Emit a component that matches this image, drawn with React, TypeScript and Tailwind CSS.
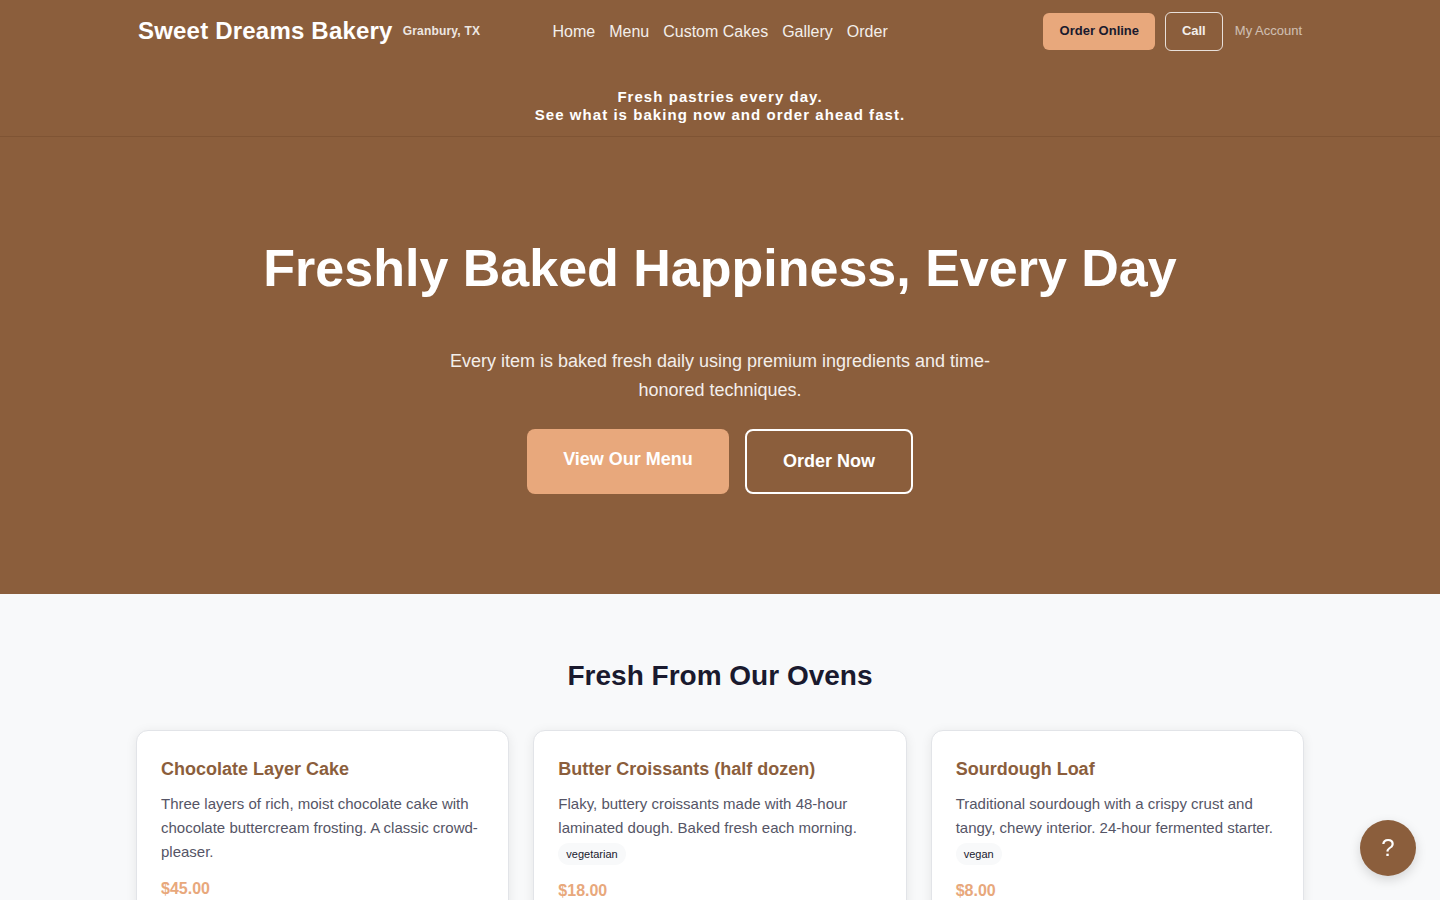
const nav = ["Home", "Menu", "Custom Cakes", "Gallery", "Order"];
const items = [
  { t: "Chocolate Layer Cake", d: "Three layers of rich, moist chocolate cake with chocolate buttercream frosting. A classic crowd-pleaser.", p: "$45.00" },
  { t: "Butter Croissants (half dozen)", d: "Flaky, buttery croissants made with 48-hour laminated dough. Baked fresh each morning.", tag: "vegetarian", p: "$18.00" },
  { t: "Sourdough Loaf", d: "Traditional sourdough with a crispy crust and tangy, chewy interior. 24-hour fermented starter.", tag: "vegan", p: "$8.00" },
];

export default function App() {
  return (
    <div className="h-[900px] overflow-hidden bg-[#f8f9fa] font-['Liberation_Sans',Arial,sans-serif] text-[#1a1a2e]">
      <div className="bg-[#8b5e3c] text-white">
        <header className="border-b border-[#7f5434]">
          <div className="mx-auto flex h-[62px] w-[1168px] items-center pl-[2px] pr-[2px]">
            <div className="flex w-[414.5px] items-center gap-[10px] tracking-[0.2px]">
              <span className="text-[24px] leading-[30px] font-bold">Sweet Dreams Bakery</span>
              <span className="text-[12px] font-bold opacity-85">Granbury, TX</span>
            </div>
            <nav className="flex gap-[14px] pt-[1px] text-[16px] opacity-90">
              {nav.map((n) => <span key={n}>{n}</span>)}
            </nav>
            <div className="ml-auto flex items-center">
              <span className="flex h-[37px] w-[112px] items-center justify-center rounded-md bg-[#e8a87c] pl-[1px] text-[13px] font-bold text-[#1a1a2e]">Order Online</span>
              <span className="ml-[10px] flex h-[39px] w-[58px] items-center justify-center rounded-md border border-white/90 text-[13px] font-bold opacity-90">Call</span>
              <span className="ml-[12px] text-[13px] opacity-60">My Account</span>
            </div>
          </div>
          <p className="pt-[26px] pb-[12px] text-center text-[15px] leading-[18px] font-bold tracking-[1.05px]">
            Fresh pastries every day.<br />See what is baking now and order ahead fast.
          </p>
        </header>
        <section className="flex h-[457px] flex-col items-center pt-[97px]">
          <h1 className="text-[52px] leading-[68px] font-bold">Freshly Baked Happiness, Every Day</h1>
          <p className="mt-[45px] w-[560px] text-center text-[18px] leading-[29px] opacity-90">
            Every item is baked fresh daily using premium ingredients and time-honored techniques.
          </p>
          <div className="mt-[24px] flex items-start gap-[16px] text-[18px] font-bold">
            <span className="h-[65px] w-[202px] rounded-lg bg-[#e8a87c] pt-[20px] text-center leading-[21px]">View Our Menu</span>
            <span className="h-[65px] w-[168px] rounded-lg border-2 border-white pt-[20px] text-center leading-[21px]">Order Now</span>
          </div>
        </section>
      </div>
      <section className="mx-auto w-[1168px] pt-[64px]">
        <h2 className="text-center text-[28px] leading-[36px] font-bold">Fresh From Our Ovens</h2>
        <div className="mt-[36px] grid grid-cols-3 gap-[24px]">
          {items.map((c) => (
            <article key={c.t} className="h-[300px] rounded-xl border border-[#e2e4e8] bg-white px-[24px] pt-[25px] shadow-[0_2px_12px_rgba(0,0,0,0.08)]">
              <h3 className="text-[18px] leading-[27px] font-bold text-[#8b5e3c]">{c.t}</h3>
              <p className="mt-[9px] text-[15px] leading-[24px] text-[#555566]">{c.d}</p>
              {c.tag && (
                <div className="flex h-[26px] items-center pt-[2px]">
                  <span className="rounded-full bg-[#f8f9fa] px-[8px] py-[3px] text-[11px] leading-[16px]">{c.tag}</span>
                </div>
              )}
              <p className="mt-[13px] text-[16px] leading-[24px] font-bold text-[#e8a87c]">{c.p}</p>
            </article>
          ))}
        </div>
      </section>
      <button className="fixed right-[24px] bottom-[24px] flex h-[56px] w-[56px] items-center justify-center rounded-full bg-[#8b5e3c] text-[24px] text-white shadow-[0_4px_12px_rgba(0,0,0,0.15)]">?</button>
    </div>
  );
}
